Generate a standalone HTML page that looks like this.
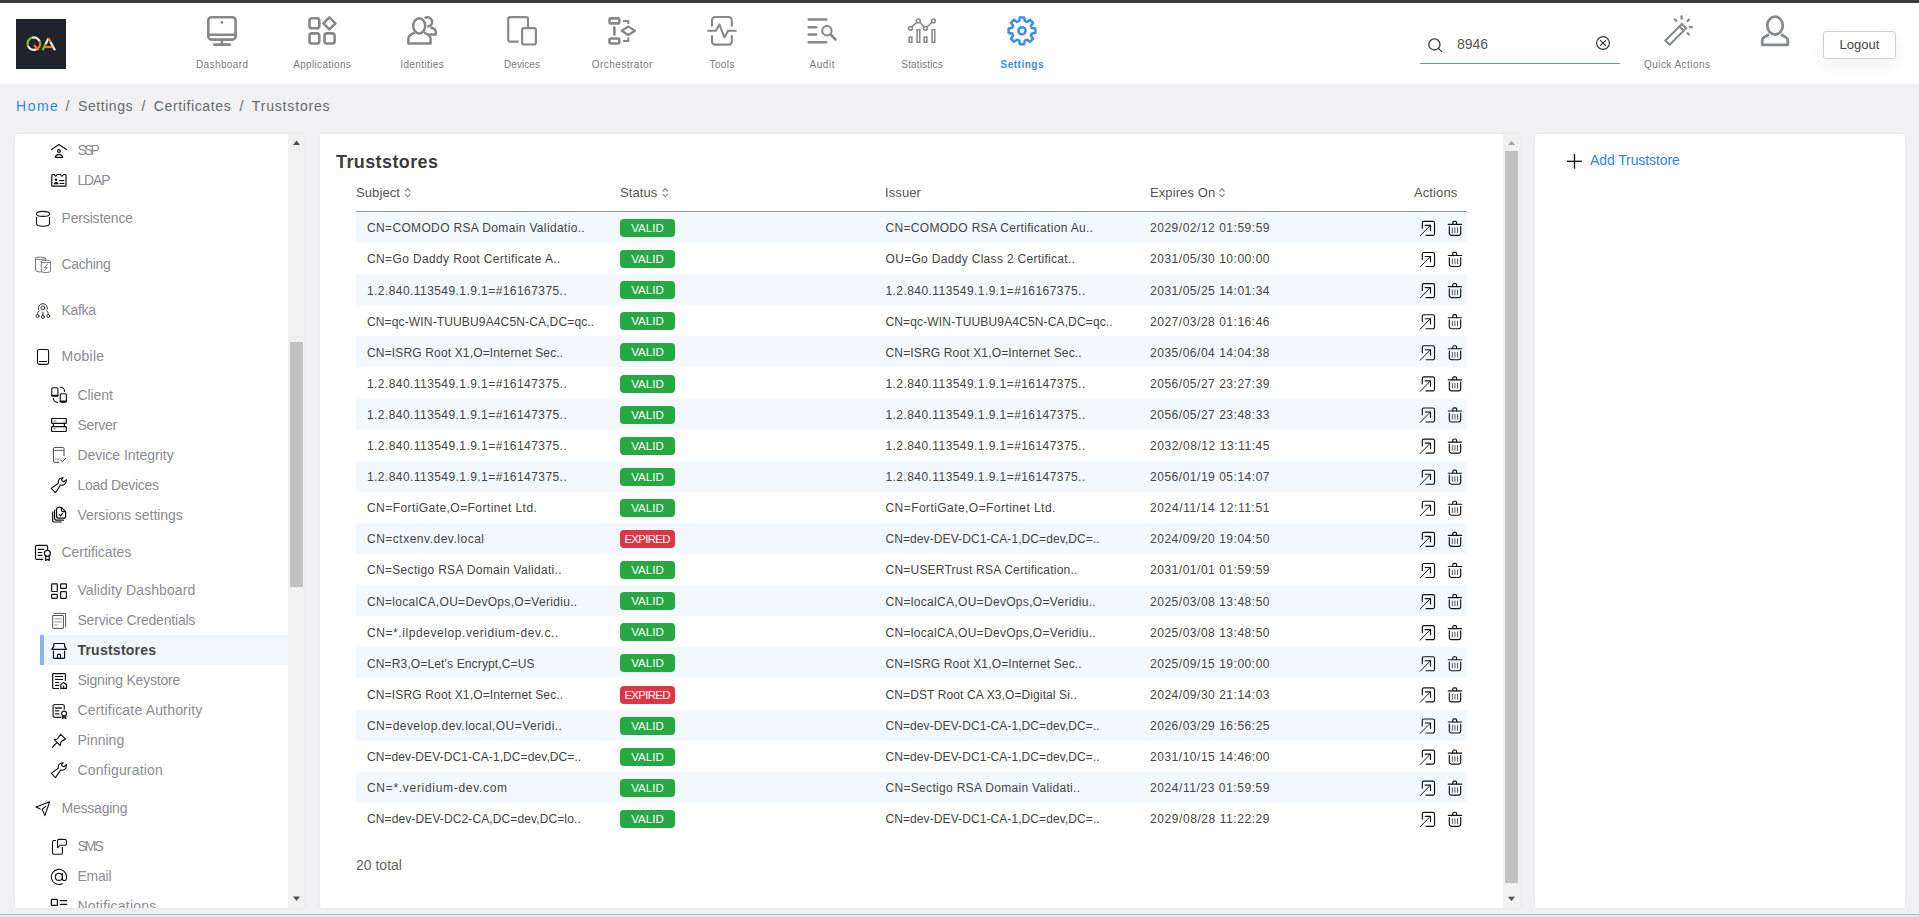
<!DOCTYPE html><html><head><meta charset='utf-8'><style>
*{margin:0;padding:0;box-sizing:border-box}
html,body{width:1919px;height:917px;overflow:hidden;background:#f1f1f3;font-family:"Liberation Sans",sans-serif}
.a{position:absolute}
.t{position:absolute;white-space:nowrap;line-height:1}
svg{position:absolute;overflow:visible}
</style></head><body><div class="a" style="left:0;top:0;width:1919px;height:3px;background:#3a3a3a"></div>
<div class="a" style="left:0;top:3px;width:1919px;height:81px;background:#fff"></div>
<div class="a" style="left:16px;top:19px;width:50px;height:50px;background:#1e232c"></div>
<div class="t" style="left:162px;width:120px;text-align:center;top:59.5px;font-size:10px;letter-spacing:0.408px;text-indent:0.408px;color:#7b7b7b;font-weight:normal">Dashboard</div>
<div class="t" style="left:262px;width:120px;text-align:center;top:59.5px;font-size:10px;letter-spacing:0.338px;text-indent:0.338px;color:#7b7b7b;font-weight:normal">Applications</div>
<div class="t" style="left:362px;width:120px;text-align:center;top:59.5px;font-size:10px;letter-spacing:0.384px;text-indent:0.384px;color:#7b7b7b;font-weight:normal">Identities</div>
<div class="t" style="left:462px;width:120px;text-align:center;top:59.5px;font-size:10px;letter-spacing:0.057px;text-indent:0.057px;color:#7b7b7b;font-weight:normal">Devices</div>
<div class="t" style="left:562px;width:120px;text-align:center;top:59.5px;font-size:10px;letter-spacing:0.454px;text-indent:0.454px;color:#7b7b7b;font-weight:normal">Orchestrator</div>
<div class="t" style="left:662px;width:120px;text-align:center;top:59.5px;font-size:10px;letter-spacing:0.428px;text-indent:0.428px;color:#7b7b7b;font-weight:normal">Tools</div>
<div class="t" style="left:762px;width:120px;text-align:center;top:59.5px;font-size:10px;letter-spacing:0.550px;text-indent:0.550px;color:#7b7b7b;font-weight:normal">Audit</div>
<div class="t" style="left:862px;width:120px;text-align:center;top:59.5px;font-size:10px;letter-spacing:0.144px;text-indent:0.144px;color:#7b7b7b;font-weight:normal">Statistics</div>
<div class="t" style="left:962px;width:120px;text-align:center;top:59.5px;font-size:10px;letter-spacing:0.500px;text-indent:0.500px;color:#3d8ae0;font-weight:bold">Settings</div>
<div class="t" style="left:16.1px;top:99.2px;font-size:14px;color:#2f86f0;letter-spacing:1.461px">Home</div>
<div class="t" style="left:65.5px;top:99.2px;font-size:14px;color:#6b6b6b;letter-spacing:0.000px">/</div>
<div class="t" style="left:78.0px;top:99.2px;font-size:14px;color:#666a6e;letter-spacing:0.563px">Settings</div>
<div class="t" style="left:141.5px;top:99.2px;font-size:14px;color:#6b6b6b;letter-spacing:0.000px">/</div>
<div class="t" style="left:153.8px;top:99.2px;font-size:14px;color:#666a6e;letter-spacing:0.621px">Certificates</div>
<div class="t" style="left:239.5px;top:99.2px;font-size:14px;color:#6b6b6b;letter-spacing:0.000px">/</div>
<div class="t" style="left:251.8px;top:99.2px;font-size:14px;color:#666a6e;letter-spacing:0.832px">Truststores</div>
<div class="a" style="left:15px;top:134px;width:289px;height:774px;background:#fff;border-radius:3px;box-shadow:0 0 5px rgba(0,0,0,0.045)"></div>
<div class="a" style="left:288px;top:134px;width:16px;height:774px;background:#f1f1f1"></div>
<div class="a" style="left:290px;top:342px;width:13px;height:245px;background:#c1c1c1"></div>
<div class="a" style="left:320px;top:134px;width:1200px;height:774px;background:#fff;border-radius:3px;box-shadow:0 0 5px rgba(0,0,0,0.045)"></div>
<div class="a" style="left:1503px;top:134px;width:17px;height:774px;background:#f1f1f1"></div>
<div class="a" style="left:1505px;top:151px;width:13px;height:732px;background:#c1c1c1"></div>
<div class="a" style="left:1535px;top:134px;width:370px;height:774px;background:#fff;border-radius:3px;box-shadow:0 0 5px rgba(0,0,0,0.045)"></div>
<div class="a" style="left:0;top:914px;width:1919px;height:1px;background:#b4bcc6"></div>
<div class="a" style="left:0;top:915px;width:1919px;height:2px;background:#e1ebf7"></div>
<div class="a" style="left:40px;top:635px;width:248px;height:30px;background:#f1f7fd"></div>
<div class="a" style="left:40px;top:635px;width:4px;height:30px;background:#8ab4ee"></div>
<div class="a" style="left:15px;top:134px;width:273px;height:774px;overflow:hidden">
<div class="t" style="left:62.400000000000006px;top:9.35px;font-size:14px;color:#8c8c92;letter-spacing:-2.767px">SSP</div>
<div class="t" style="left:62.400000000000006px;top:39.35px;font-size:14px;color:#8c8c92;letter-spacing:-1.089px">LDAP</div>
<div class="t" style="left:46.5px;top:76.95px;font-size:14px;color:#8c8c92;letter-spacing:-0.163px">Persistence</div>
<div class="t" style="left:46.5px;top:122.85px;font-size:14px;color:#8c8c92;letter-spacing:-0.353px">Caching</div>
<div class="t" style="left:46.5px;top:169.15px;font-size:14px;color:#8c8c92;letter-spacing:-0.320px">Kafka</div>
<div class="t" style="left:46.5px;top:215.35px;font-size:14px;color:#8c8c92;letter-spacing:0.258px">Mobile</div>
<div class="t" style="left:62.400000000000006px;top:253.75px;font-size:14px;color:#8c8c92;letter-spacing:-0.057px">Client</div>
<div class="t" style="left:62.400000000000006px;top:283.75px;font-size:14px;color:#8c8c92;letter-spacing:-0.279px">Server</div>
<div class="t" style="left:62.400000000000006px;top:313.75px;font-size:14px;color:#8c8c92;letter-spacing:-0.013px">Device Integrity</div>
<div class="t" style="left:62.400000000000006px;top:343.75px;font-size:14px;color:#8c8c92;letter-spacing:-0.286px">Load Devices</div>
<div class="t" style="left:62.400000000000006px;top:373.75px;font-size:14px;color:#8c8c92;letter-spacing:-0.022px">Versions settings</div>
<div class="t" style="left:46.5px;top:411.45px;font-size:14px;color:#8c8c92;letter-spacing:-0.028px">Certificates</div>
<div class="t" style="left:62.400000000000006px;top:449.45px;font-size:14px;color:#8c8c92;letter-spacing:0.078px">Validity Dashboard</div>
<div class="t" style="left:62.400000000000006px;top:479.45px;font-size:14px;color:#8c8c92;letter-spacing:-0.182px">Service Credentials</div>
<div class="t" style="left:62.400000000000006px;top:508.65px;font-size:14px;font-weight:bold;color:#444;letter-spacing:0.25px">Truststores</div>
<div class="t" style="left:62.400000000000006px;top:539.45px;font-size:14px;color:#8c8c92;letter-spacing:-0.190px">Signing Keystore</div>
<div class="t" style="left:62.400000000000006px;top:569.45px;font-size:14px;color:#8c8c92;letter-spacing:0.176px">Certificate Authority</div>
<div class="t" style="left:62.400000000000006px;top:599.45px;font-size:14px;color:#8c8c92;letter-spacing:0.019px">Pinning</div>
<div class="t" style="left:62.400000000000006px;top:629.45px;font-size:14px;color:#8c8c92;letter-spacing:0.173px">Configuration</div>
<div class="t" style="left:46.5px;top:667.45px;font-size:14px;color:#8c8c92;letter-spacing:-0.220px">Messaging</div>
<div class="t" style="left:62.400000000000006px;top:705.45px;font-size:14px;color:#8c8c92;letter-spacing:-1.982px">SMS</div>
<div class="t" style="left:62.400000000000006px;top:735.45px;font-size:14px;color:#8c8c92;letter-spacing:-0.215px">Email</div>
<div class="t" style="left:62.400000000000006px;top:765.45px;font-size:14px;color:#8c8c92;letter-spacing:0.218px">Notifications</div>
</div>
<div class="t" style="left:336px;top:153px;font-size:18px;font-weight:bold;color:#3c3c3c;letter-spacing:0.4px">Truststores</div>
<div class="t" style="left:356px;top:186px;font-size:13px;color:#555;letter-spacing:0.1px">Subject</div>
<div class="t" style="left:620px;top:186px;font-size:13px;color:#555;letter-spacing:0.1px">Status</div>
<div class="t" style="left:885px;top:186px;font-size:13px;color:#555;letter-spacing:0.1px">Issuer</div>
<div class="t" style="left:1150px;top:186px;font-size:13px;color:#555;letter-spacing:0.1px">Expires On</div>
<div class="t" style="left:1414px;top:186px;font-size:13px;color:#555;letter-spacing:0.1px">Actions</div>
<div class="a" style="left:356px;top:211px;width:1111px;height:1px;background:#9a9a9a"></div>
<div class="a" style="left:356px;top:212.00px;width:1111px;height:31.1px;background:#f3f8fc"></div>
<div class="t" style="left:367px;top:222.30px;font-size:12px;color:#444;letter-spacing:0.350px">CN=COMODO RSA Domain Validatio..</div>
<div class="t" style="left:885.5px;top:222.30px;font-size:12px;color:#444;letter-spacing:0.313px">CN=COMODO RSA Certification Au..</div>
<div class="t" style="left:1150px;top:222.30px;font-size:12px;color:#444;letter-spacing:0.523px">2029/02/12 01:59:59</div>
<div class="t" style="left:620px;top:219.00px;width:55px;height:18px;border-radius:4px;background:#28a745;color:#fff;font-size:11.5px;line-height:18px;text-align:center;letter-spacing:0.006px;text-indent:0.006px">VALID</div>
<div class="t" style="left:367px;top:253.40px;font-size:12px;color:#444;letter-spacing:0.373px">CN=Go Daddy Root Certificate A..</div>
<div class="t" style="left:885.5px;top:253.40px;font-size:12px;color:#444;letter-spacing:0.315px">OU=Go Daddy Class 2 Certificat..</div>
<div class="t" style="left:1150px;top:253.40px;font-size:12px;color:#444;letter-spacing:0.523px">2031/05/30 10:00:00</div>
<div class="t" style="left:620px;top:250.10px;width:55px;height:18px;border-radius:4px;background:#28a745;color:#fff;font-size:11.5px;line-height:18px;text-align:center;letter-spacing:0.006px;text-indent:0.006px">VALID</div>
<div class="a" style="left:356px;top:274.20px;width:1111px;height:31.1px;background:#f3f8fc"></div>
<div class="t" style="left:367px;top:284.50px;font-size:12px;color:#444;letter-spacing:0.433px">1.2.840.113549.1.9.1=#16167375..</div>
<div class="t" style="left:885.5px;top:284.50px;font-size:12px;color:#444;letter-spacing:0.433px">1.2.840.113549.1.9.1=#16167375..</div>
<div class="t" style="left:1150px;top:284.50px;font-size:12px;color:#444;letter-spacing:0.523px">2031/05/25 14:01:34</div>
<div class="t" style="left:620px;top:281.20px;width:55px;height:18px;border-radius:4px;background:#28a745;color:#fff;font-size:11.5px;line-height:18px;text-align:center;letter-spacing:0.006px;text-indent:0.006px">VALID</div>
<div class="t" style="left:367px;top:315.60px;font-size:12px;color:#444;letter-spacing:0.144px">CN=qc-WIN-TUUBU9A4C5N-CA,DC=qc..</div>
<div class="t" style="left:885.5px;top:315.60px;font-size:12px;color:#444;letter-spacing:0.144px">CN=qc-WIN-TUUBU9A4C5N-CA,DC=qc..</div>
<div class="t" style="left:1150px;top:315.60px;font-size:12px;color:#444;letter-spacing:0.523px">2027/03/28 01:16:46</div>
<div class="t" style="left:620px;top:312.30px;width:55px;height:18px;border-radius:4px;background:#28a745;color:#fff;font-size:11.5px;line-height:18px;text-align:center;letter-spacing:0.006px;text-indent:0.006px">VALID</div>
<div class="a" style="left:356px;top:336.40px;width:1111px;height:31.1px;background:#f3f8fc"></div>
<div class="t" style="left:367px;top:346.70px;font-size:12px;color:#444;letter-spacing:0.153px">CN=ISRG Root X1,O=Internet Sec..</div>
<div class="t" style="left:885.5px;top:346.70px;font-size:12px;color:#444;letter-spacing:0.153px">CN=ISRG Root X1,O=Internet Sec..</div>
<div class="t" style="left:1150px;top:346.70px;font-size:12px;color:#444;letter-spacing:0.523px">2035/06/04 14:04:38</div>
<div class="t" style="left:620px;top:343.40px;width:55px;height:18px;border-radius:4px;background:#28a745;color:#fff;font-size:11.5px;line-height:18px;text-align:center;letter-spacing:0.006px;text-indent:0.006px">VALID</div>
<div class="t" style="left:367px;top:377.80px;font-size:12px;color:#444;letter-spacing:0.433px">1.2.840.113549.1.9.1=#16147375..</div>
<div class="t" style="left:885.5px;top:377.80px;font-size:12px;color:#444;letter-spacing:0.433px">1.2.840.113549.1.9.1=#16147375..</div>
<div class="t" style="left:1150px;top:377.80px;font-size:12px;color:#444;letter-spacing:0.523px">2056/05/27 23:27:39</div>
<div class="t" style="left:620px;top:374.50px;width:55px;height:18px;border-radius:4px;background:#28a745;color:#fff;font-size:11.5px;line-height:18px;text-align:center;letter-spacing:0.006px;text-indent:0.006px">VALID</div>
<div class="a" style="left:356px;top:398.60px;width:1111px;height:31.1px;background:#f3f8fc"></div>
<div class="t" style="left:367px;top:408.90px;font-size:12px;color:#444;letter-spacing:0.433px">1.2.840.113549.1.9.1=#16147375..</div>
<div class="t" style="left:885.5px;top:408.90px;font-size:12px;color:#444;letter-spacing:0.433px">1.2.840.113549.1.9.1=#16147375..</div>
<div class="t" style="left:1150px;top:408.90px;font-size:12px;color:#444;letter-spacing:0.523px">2056/05/27 23:48:33</div>
<div class="t" style="left:620px;top:405.60px;width:55px;height:18px;border-radius:4px;background:#28a745;color:#fff;font-size:11.5px;line-height:18px;text-align:center;letter-spacing:0.006px;text-indent:0.006px">VALID</div>
<div class="t" style="left:367px;top:440.00px;font-size:12px;color:#444;letter-spacing:0.433px">1.2.840.113549.1.9.1=#16147375..</div>
<div class="t" style="left:885.5px;top:440.00px;font-size:12px;color:#444;letter-spacing:0.433px">1.2.840.113549.1.9.1=#16147375..</div>
<div class="t" style="left:1150px;top:440.00px;font-size:12px;color:#444;letter-spacing:0.573px">2032/08/12 13:11:45</div>
<div class="t" style="left:620px;top:436.70px;width:55px;height:18px;border-radius:4px;background:#28a745;color:#fff;font-size:11.5px;line-height:18px;text-align:center;letter-spacing:0.006px;text-indent:0.006px">VALID</div>
<div class="a" style="left:356px;top:460.80px;width:1111px;height:31.1px;background:#f3f8fc"></div>
<div class="t" style="left:367px;top:471.10px;font-size:12px;color:#444;letter-spacing:0.433px">1.2.840.113549.1.9.1=#16147375..</div>
<div class="t" style="left:885.5px;top:471.10px;font-size:12px;color:#444;letter-spacing:0.433px">1.2.840.113549.1.9.1=#16147375..</div>
<div class="t" style="left:1150px;top:471.10px;font-size:12px;color:#444;letter-spacing:0.523px">2056/01/19 05:14:07</div>
<div class="t" style="left:620px;top:467.80px;width:55px;height:18px;border-radius:4px;background:#28a745;color:#fff;font-size:11.5px;line-height:18px;text-align:center;letter-spacing:0.006px;text-indent:0.006px">VALID</div>
<div class="t" style="left:367px;top:502.20px;font-size:12px;color:#444;letter-spacing:0.436px">CN=FortiGate,O=Fortinet Ltd.</div>
<div class="t" style="left:885.5px;top:502.20px;font-size:12px;color:#444;letter-spacing:0.436px">CN=FortiGate,O=Fortinet Ltd.</div>
<div class="t" style="left:1150px;top:502.20px;font-size:12px;color:#444;letter-spacing:0.622px">2024/11/14 12:11:51</div>
<div class="t" style="left:620px;top:498.90px;width:55px;height:18px;border-radius:4px;background:#28a745;color:#fff;font-size:11.5px;line-height:18px;text-align:center;letter-spacing:0.006px;text-indent:0.006px">VALID</div>
<div class="a" style="left:356px;top:523.00px;width:1111px;height:31.1px;background:#f3f8fc"></div>
<div class="t" style="left:367px;top:533.30px;font-size:12px;color:#444;letter-spacing:0.503px">CN=ctxenv.dev.local</div>
<div class="t" style="left:885.5px;top:533.30px;font-size:12px;color:#444;letter-spacing:0.086px">CN=dev-DEV-DC1-CA-1,DC=dev,DC=..</div>
<div class="t" style="left:1150px;top:533.30px;font-size:12px;color:#444;letter-spacing:0.523px">2024/09/20 19:04:50</div>
<div class="t" style="left:620px;top:530.00px;width:55px;height:18px;border-radius:4px;background:#dc3545;color:#fff;font-size:11.5px;line-height:18px;text-align:center;letter-spacing:-0.712px;text-indent:-0.712px">EXPIRED</div>
<div class="t" style="left:367px;top:564.40px;font-size:12px;color:#444;letter-spacing:0.312px">CN=Sectigo RSA Domain Validati..</div>
<div class="t" style="left:885.5px;top:564.40px;font-size:12px;color:#444;letter-spacing:0.218px">CN=USERTrust RSA Certification..</div>
<div class="t" style="left:1150px;top:564.40px;font-size:12px;color:#444;letter-spacing:0.523px">2031/01/01 01:59:59</div>
<div class="t" style="left:620px;top:561.10px;width:55px;height:18px;border-radius:4px;background:#28a745;color:#fff;font-size:11.5px;line-height:18px;text-align:center;letter-spacing:0.006px;text-indent:0.006px">VALID</div>
<div class="a" style="left:356px;top:585.20px;width:1111px;height:31.1px;background:#f3f8fc"></div>
<div class="t" style="left:367px;top:595.50px;font-size:12px;color:#444;letter-spacing:0.314px">CN=localCA,OU=DevOps,O=Veridiu..</div>
<div class="t" style="left:885.5px;top:595.50px;font-size:12px;color:#444;letter-spacing:0.314px">CN=localCA,OU=DevOps,O=Veridiu..</div>
<div class="t" style="left:1150px;top:595.50px;font-size:12px;color:#444;letter-spacing:0.523px">2025/03/08 13:48:50</div>
<div class="t" style="left:620px;top:592.20px;width:55px;height:18px;border-radius:4px;background:#28a745;color:#fff;font-size:11.5px;line-height:18px;text-align:center;letter-spacing:0.006px;text-indent:0.006px">VALID</div>
<div class="t" style="left:367px;top:626.60px;font-size:12px;color:#444;letter-spacing:0.574px">CN=*.ilpdevelop.veridium-dev.c..</div>
<div class="t" style="left:885.5px;top:626.60px;font-size:12px;color:#444;letter-spacing:0.314px">CN=localCA,OU=DevOps,O=Veridiu..</div>
<div class="t" style="left:1150px;top:626.60px;font-size:12px;color:#444;letter-spacing:0.523px">2025/03/08 13:48:50</div>
<div class="t" style="left:620px;top:623.30px;width:55px;height:18px;border-radius:4px;background:#28a745;color:#fff;font-size:11.5px;line-height:18px;text-align:center;letter-spacing:0.006px;text-indent:0.006px">VALID</div>
<div class="a" style="left:356px;top:647.40px;width:1111px;height:31.1px;background:#f3f8fc"></div>
<div class="t" style="left:367px;top:657.70px;font-size:12px;color:#444;letter-spacing:0.142px">CN=R3,O=Let&#39;s Encrypt,C=US</div>
<div class="t" style="left:885.5px;top:657.70px;font-size:12px;color:#444;letter-spacing:0.153px">CN=ISRG Root X1,O=Internet Sec..</div>
<div class="t" style="left:1150px;top:657.70px;font-size:12px;color:#444;letter-spacing:0.523px">2025/09/15 19:00:00</div>
<div class="t" style="left:620px;top:654.40px;width:55px;height:18px;border-radius:4px;background:#28a745;color:#fff;font-size:11.5px;line-height:18px;text-align:center;letter-spacing:0.006px;text-indent:0.006px">VALID</div>
<div class="t" style="left:367px;top:688.80px;font-size:12px;color:#444;letter-spacing:0.153px">CN=ISRG Root X1,O=Internet Sec..</div>
<div class="t" style="left:885.5px;top:688.80px;font-size:12px;color:#444;letter-spacing:0.110px">CN=DST Root CA X3,O=Digital Si..</div>
<div class="t" style="left:1150px;top:688.80px;font-size:12px;color:#444;letter-spacing:0.523px">2024/09/30 21:14:03</div>
<div class="t" style="left:620px;top:685.50px;width:55px;height:18px;border-radius:4px;background:#dc3545;color:#fff;font-size:11.5px;line-height:18px;text-align:center;letter-spacing:-0.712px;text-indent:-0.712px">EXPIRED</div>
<div class="a" style="left:356px;top:709.60px;width:1111px;height:31.1px;background:#f3f8fc"></div>
<div class="t" style="left:367px;top:719.90px;font-size:12px;color:#444;letter-spacing:0.443px">CN=develop.dev.local,OU=Veridi..</div>
<div class="t" style="left:885.5px;top:719.90px;font-size:12px;color:#444;letter-spacing:0.086px">CN=dev-DEV-DC1-CA-1,DC=dev,DC=..</div>
<div class="t" style="left:1150px;top:719.90px;font-size:12px;color:#444;letter-spacing:0.523px">2026/03/29 16:56:25</div>
<div class="t" style="left:620px;top:716.60px;width:55px;height:18px;border-radius:4px;background:#28a745;color:#fff;font-size:11.5px;line-height:18px;text-align:center;letter-spacing:0.006px;text-indent:0.006px">VALID</div>
<div class="t" style="left:367px;top:751.00px;font-size:12px;color:#444;letter-spacing:0.086px">CN=dev-DEV-DC1-CA-1,DC=dev,DC=..</div>
<div class="t" style="left:885.5px;top:751.00px;font-size:12px;color:#444;letter-spacing:0.086px">CN=dev-DEV-DC1-CA-1,DC=dev,DC=..</div>
<div class="t" style="left:1150px;top:751.00px;font-size:12px;color:#444;letter-spacing:0.523px">2031/10/15 14:46:00</div>
<div class="t" style="left:620px;top:747.70px;width:55px;height:18px;border-radius:4px;background:#28a745;color:#fff;font-size:11.5px;line-height:18px;text-align:center;letter-spacing:0.006px;text-indent:0.006px">VALID</div>
<div class="a" style="left:356px;top:771.80px;width:1111px;height:31.1px;background:#f3f8fc"></div>
<div class="t" style="left:367px;top:782.10px;font-size:12px;color:#444;letter-spacing:0.695px">CN=*.veridium-dev.com</div>
<div class="t" style="left:885.5px;top:782.10px;font-size:12px;color:#444;letter-spacing:0.312px">CN=Sectigo RSA Domain Validati..</div>
<div class="t" style="left:1150px;top:782.10px;font-size:12px;color:#444;letter-spacing:0.573px">2024/11/23 01:59:59</div>
<div class="t" style="left:620px;top:778.80px;width:55px;height:18px;border-radius:4px;background:#28a745;color:#fff;font-size:11.5px;line-height:18px;text-align:center;letter-spacing:0.006px;text-indent:0.006px">VALID</div>
<div class="t" style="left:367px;top:813.20px;font-size:12px;color:#444;letter-spacing:0.114px">CN=dev-DEV-DC2-CA,DC=dev,DC=lo..</div>
<div class="t" style="left:885.5px;top:813.20px;font-size:12px;color:#444;letter-spacing:0.086px">CN=dev-DEV-DC1-CA-1,DC=dev,DC=..</div>
<div class="t" style="left:1150px;top:813.20px;font-size:12px;color:#444;letter-spacing:0.573px">2029/08/28 11:22:29</div>
<div class="t" style="left:620px;top:809.90px;width:55px;height:18px;border-radius:4px;background:#28a745;color:#fff;font-size:11.5px;line-height:18px;text-align:center;letter-spacing:0.006px;text-indent:0.006px">VALID</div>
<div class="t" style="left:356px;top:858px;font-size:14px;color:#666">20 total</div>
<div class="t" style="left:1590px;top:153px;font-size:14px;color:#2d86ee;letter-spacing:-0.1px">Add Truststore</div>
<div class="a" style="left:1420px;top:63px;width:200px;height:1px;background:#7d9298"></div>
<div class="t" style="left:1457px;top:37px;font-size:14px;color:#555">8946</div>
<div class="t" style="left:1617px;width:120px;text-align:center;top:59.5px;font-size:10px;letter-spacing:0.45px;text-indent:0.45px;color:#7b7b7b">Quick Actions</div>
<div class="a" style="left:1823px;top:31px;width:73px;height:28px;border:1px solid #cfcfcf;border-radius:3px;background:#fff;box-shadow:0 7px 18px rgba(0,0,0,0.055)"></div>
<div class="t" style="left:1823px;width:73px;text-align:center;top:38px;font-size:13px;color:#444">Logout</div>
<svg class="a" style="left:0;top:0" width="1919" height="917" viewBox="0 0 1919 917"><g fill="none" stroke="#878787" stroke-width="2.6" stroke-linecap="round" stroke-linejoin="round"><rect x="208.3" y="17.2" width="27.3" height="22.4" rx="3.2"/><line x1="208.3" y1="34.7" x2="235.6" y2="34.7"/><line x1="221.9" y1="39.6" x2="221.9" y2="44.4"/><line x1="214.3" y1="44.6" x2="229.9" y2="44.6"/></g><circle cx="221.9" cy="22.3" r="1.35" fill="#878787"/>
<g fill="none" stroke="#878787" stroke-width="2.6" stroke-linejoin="round"><rect x="309.5" y="18.2" width="9.8" height="10" rx="2.3"/><rect x="309.5" y="33.4" width="9.8" height="10.1" rx="2.3"/><rect x="324.5" y="33.4" width="10.1" height="10.1" rx="2.3"/><path d="M329.4,17.3 L335.4,23.3 L329.4,29.3 L323.4,23.3 Z"/></g>
<g fill="none" stroke="#878787" stroke-width="2.5" stroke-linejoin="round"><ellipse cx="419.2" cy="25.8" rx="6" ry="7.6"/><path d="M414.6,32.6 C411,34.2 408.4,35.6 408.4,38.5 V43.5 H430.6 V38.5 C430.6,36.5 428.6,34.6 424.2,32.6"/><path d="M424.6,18.2 A4.7,4.7 0 1 1 427.2,26.6"/><path d="M430.4,27.6 C433.5,28.2 435.8,29.5 435.8,32 V34.6 H428.5"/></g>
<g fill="none" stroke="#868a8d" stroke-width="2.2" stroke-linecap="round" stroke-linejoin="round"><path d="M517.8,41.7 H510.3 A2,2 0 0 1 508.2,39.7 V19.1 A2,2 0 0 1 510.2,17.1 H526 A2,2 0 0 1 528,19.1 V27.8"/><rect x="522.1" y="28.2" width="13.8" height="16.3" rx="2"/></g>
<g fill="none" stroke="#878787" stroke-width="2.6" stroke-linecap="round" stroke-linejoin="round"><rect x="609.5" y="18.4" width="9.8" height="5" rx="1.5"/><rect x="609.5" y="38.5" width="9.8" height="5" rx="1.5"/><line x1="614.4" y1="27.6" x2="614.4" y2="34.5"/><path d="M628.3,26.6 L635,30.8 L628.3,35 L621.6,30.8 Z" stroke-width="2.2"/><path d="M623,21 H628.3 V24" stroke-width="2" stroke-linecap="butt"/><path d="M628.3,37.6 V41 H623" stroke-width="2" stroke-linecap="butt"/></g>
<g fill="none" stroke="#878787" stroke-width="2.1" stroke-linecap="butt" stroke-linejoin="round"><path d="M712,26.6 V20.2 A3.2,3.2 0 0 1 715.2,17 H728.6 A3.2,3.2 0 0 1 731.8,20.2 V26.6"/><path d="M712,35.3 V41.4 A3.2,3.2 0 0 0 715.2,44.6 H728.6 A3.2,3.2 0 0 0 731.8,41.4 V35.3"/><path d="M707.4,30.8 H715.9 L719.4,24.4 L724.4,37.5 L728.1,30.8 H736.6"/></g>
<g fill="none" stroke="#878787" stroke-width="2.5" stroke-linecap="round"><line x1="808.8" y1="19.5" x2="826.3" y2="19.5"/><line x1="808.8" y1="27.2" x2="816.2" y2="27.2"/><line x1="808.8" y1="34.6" x2="816.2" y2="34.6"/><line x1="808.8" y1="42.3" x2="826.3" y2="42.3"/><circle cx="826.9" cy="30.8" r="4.7" stroke-width="2"/><line x1="830.6" y1="34.5" x2="835.6" y2="39.5"/></g>
<g fill="none" stroke="#878787" stroke-width="1.5"><rect x="909.2" y="37.1" width="2.7" height="5.2"/><rect x="917.1" y="29.7" width="2.7" height="12.6"/><rect x="924.2" y="37.1" width="2.7" height="5.2"/><rect x="932.1" y="29.7" width="2.7" height="12.6"/><circle cx="910.5" cy="28.3" r="1.9"/><circle cx="918.3" cy="20.9" r="1.9"/><circle cx="925.5" cy="28.3" r="1.9"/><circle cx="933.4" cy="20.9" r="1.9"/><line x1="911.9" y1="27" x2="916.9" y2="22.2"/><line x1="919.7" y1="22.2" x2="924.1" y2="27"/><line x1="926.9" y1="27" x2="932" y2="22.2"/></g>
<g fill="none" stroke="#3d8fe3" stroke-width="2.5" stroke-linejoin="round"><path d="M1019.27,20.97 L1019.76,17.39 L1024.24,17.39 L1024.73,20.97 L1027.02,21.92 L1029.90,19.73 L1033.07,22.90 L1030.88,25.78 L1031.83,28.07 L1035.41,28.56 L1035.41,33.04 L1031.83,33.53 L1030.88,35.82 L1033.07,38.70 L1029.90,41.87 L1027.02,39.68 L1024.73,40.63 L1024.24,44.21 L1019.76,44.21 L1019.27,40.63 L1016.98,39.68 L1014.10,41.87 L1010.93,38.70 L1013.12,35.82 L1012.17,33.53 L1008.59,33.04 L1008.59,28.56 L1012.17,28.07 L1013.12,25.78 L1010.93,22.90 L1014.10,19.73 L1016.98,21.92Z"/><circle cx="1022" cy="30.8" r="3.6"/></g>
<g fill="none" stroke="#3a3a3a" stroke-width="1.3" stroke-linecap="round"><circle cx="1434.4" cy="44.4" r="5.6"/><line x1="1438.4" y1="48.4" x2="1441.6" y2="51.6"/></g>
<g fill="none" stroke="#3a3a3a" stroke-width="1.2" stroke-linecap="round"><circle cx="1603" cy="43" r="6.4"/><line x1="1600.3" y1="40.3" x2="1605.7" y2="45.7"/><line x1="1605.7" y1="40.3" x2="1600.3" y2="45.7"/></g>
<g fill="none" stroke="#888b8d" stroke-width="2.1" stroke-linecap="round"><path d="M1665.4,40.6 L1681.9,24.1 L1686.1,28.3 L1669.6,44.8 Z" stroke-linejoin="miter"/><line x1="1679.4" y1="26.6" x2="1683.6" y2="30.8"/><line x1="1681.6" y1="16.4" x2="1681.6" y2="18.8" stroke-width="2.3"/><line x1="1674.9" y1="19.4" x2="1676.3" y2="20.8" stroke-width="2.3"/><line x1="1688.9" y1="19.6" x2="1687.5" y2="21" stroke-width="2.3"/><line x1="1689.8" y1="27.2" x2="1691.9" y2="27.2" stroke-width="2.3"/><line x1="1687.7" y1="33.2" x2="1689" y2="34.5" stroke-width="2.3"/></g>
<g fill="none" stroke="#878b8e" stroke-width="2.8" stroke-linejoin="round"><ellipse cx="1775" cy="25.6" rx="7.8" ry="8.9"/><path d="M1769,34.6 L1764.5,37 C1762.8,38 1762.2,39 1762.2,40.6 V44.8 H1787.8 V40.6 C1787.8,39 1787.2,38 1785.5,37 L1781,34.6"/></g>
<g fill="none" stroke-width="2.2">
<path d="M31.65,37.68 A6.3,6.3 0 0 1 39.72,41.45" stroke="#eeeeee"/>
<path d="M39.72,41.45 A6.3,6.3 0 0 1 36.95,49.06" stroke="#f07c22"/>
<path d="M36.95,49.06 A6.3,6.3 0 0 1 27.88,45.75" stroke="#f2f2f2"/>
<path d="M27.88,45.75 A6.3,6.3 0 0 1 31.65,37.68" stroke="#7cc620"/>
<line x1="34" y1="45" x2="38.6" y2="50" stroke="#f07c22"/>
<line x1="42.6" y1="50.3" x2="45.5" y2="44.2" stroke="#7cc620"/>
<line x1="45.5" y1="44.2" x2="48.5" y2="38.2" stroke="#eeeeee"/>
<line x1="48.5" y1="38.2" x2="50.5" y2="42" stroke="#f07c22"/>
<line x1="50.5" y1="42" x2="55" y2="50.3" stroke="#eeeeee"/>
<line x1="44.8" y1="47" x2="52.6" y2="47" stroke="#f07c22"/>
</g>
<g fill="none" stroke="#111" stroke-width="1.2" stroke-linecap="round" stroke-linejoin="round" ><path d="M51.5,149.6 L58.9,144.6 L66.6,149.6"/><circle cx="58.9" cy="151" r="1.4"/><path d="M55.3,157.4 C55.6,155.3 57,154.3 58.9,154.3 C60.8,154.3 62.3,155.3 62.6,157.4 Z"/></g>
<g fill="none" stroke="#111" stroke-width="1.2" stroke-linecap="round" stroke-linejoin="round" ><path d="M51.8,186.1 V175.5 A1,1 0 0 1 52.8,174.5 H54.2 Q55.6,177.6 57,174.5 H60.5 Q61.9,177.6 63.3,174.5 H65 A1,1 0 0 1 66,175.5 V186.1 Z"/><line x1="59.6" y1="180.5" x2="63.8" y2="180.5"/><line x1="60" y1="183.5" x2="63.8" y2="183.5"/><circle cx="56" cy="179.8" r="0.6"/><path d="M54.3,183.7 Q56.1,181.6 57.9,183.7 Z" fill="#111"/></g>
<g fill="none" stroke="#111" stroke-width="1.1" stroke-linecap="round" stroke-linejoin="round" ><ellipse cx="43" cy="213.9" rx="6.5" ry="2.5"/><path d="M36.5,217.2 V223.8 C36.5,225.4 39.5,226.2 43,226.2 C46.5,226.2 49.5,225.4 49.5,223.8 V217.2"/></g>
<g fill="none" stroke="#6a6a6a" stroke-width="0.9" stroke-linecap="round" stroke-linejoin="round" ><path d="M35.5,258.5 V270 C35.5,271.3 37.8,271.9 40.5,271.9 H41.3"/><ellipse cx="40.5" cy="258.3" rx="5" ry="1.2"/><path d="M45.5,258.5 V260.4"/><path d="M41.3,261.6 V271 C41.3,272 43.3,272.5 46,272.5 C48.7,272.5 50.6,272 50.6,271 V261.6 C50.6,260.6 48.7,260.3 46,260.3 C43.3,260.3 41.3,260.6 41.3,261.6 Z"/><line x1="41.5" y1="262.6" x2="50.5" y2="262.6"/><path d="M47.3,264.3 L44.5,267.6 H47.2 L44.6,270.4"/></g>
<g fill="none" stroke="#333" stroke-width="1.0" stroke-linecap="round" stroke-linejoin="round" ><path d="M38.4,309.2 A4.6,4.6 0 1 1 47.4,309.2"/><circle cx="42.9" cy="307.9" r="2"/><path d="M39.3,310.9 C38,311.6 37.5,312.5 37.5,314.2"/><path d="M46.5,310.9 C47.8,311.6 48.3,312.5 48.3,314.2"/><line x1="42.9" y1="312.2" x2="42.9" y2="315"/><circle cx="37.5" cy="316" r="1.5"/><circle cx="42.9" cy="316.9" r="1.5"/><circle cx="48.3" cy="316" r="1.5"/></g>
<g fill="none" stroke="#111" stroke-width="1.1" stroke-linecap="round" stroke-linejoin="round" ><rect x="37.5" y="349.5" width="11.1" height="14.9" rx="1.6"/><line x1="39.4" y1="361.5" x2="46.7" y2="361.5"/></g>
<g fill="none" stroke="#111" stroke-width="1.1" stroke-linecap="round" stroke-linejoin="round" ><rect x="51.8" y="387.8" width="6.1" height="8.4" rx="1"/><line x1="51.8" y1="395.5" x2="57.9" y2="395.5" stroke-width="1.6"/><rect x="60.3" y="393.8" width="6.1" height="8.3" rx="1"/><line x1="60.3" y1="401.4" x2="66.4" y2="401.4" stroke-width="1.6"/><path d="M60.3,387.3 A4.3,4.3 0 0 1 64.6,391.4"/><path d="M53.4,398.3 A4.2,4.2 0 0 0 57.5,402.4"/></g>
<g fill="none" stroke="#111" stroke-width="1.2" stroke-linecap="round" stroke-linejoin="round" ><rect x="51.6" y="418.5" width="14.7" height="4.9" rx="0.5"/><rect x="51.6" y="426.6" width="14.7" height="4.9" rx="0.5"/><line x1="53.5" y1="423.4" x2="53.5" y2="426.6"/><line x1="64.4" y1="423.4" x2="64.4" y2="426.6"/><line x1="53.7" y1="421" x2="56" y2="421" stroke="#777" stroke-width="1"/><line x1="63.3" y1="421" x2="64" y2="421" stroke="#bbb" stroke-width="1"/><line x1="53.7" y1="429" x2="56" y2="429" stroke="#777" stroke-width="1"/><line x1="63.3" y1="429" x2="64" y2="429" stroke="#bbb" stroke-width="1"/></g>
<g fill="none" stroke="#111" stroke-width="1.0" stroke-linecap="round" stroke-linejoin="round" ><path d="M58.8,462.3 H54.8 A1.3,1.3 0 0 1 53.5,461 V448.7 A1.3,1.3 0 0 1 54.8,447.4 H62.7 A1.3,1.3 0 0 1 64,448.7 V455.6" stroke="#444"/><line x1="53.5" y1="450.4" x2="64" y2="450.4" stroke="#666"/><line x1="53.5" y1="459" x2="58.8" y2="459" stroke="#999"/><path d="M60.5,460 L62.3,461.6 L65.8,458.3" stroke="#555"/></g>
<g fill="none" stroke="#111" stroke-width="1.1" stroke-linecap="round" stroke-linejoin="round" ><path transform="translate(0,0)" d="M51.2,488.4 L58.3,483.2 C58,481.6 58.2,480.4 59.4,479.1 C60.4,478 61.6,477.6 63.3,477.7 L61.5,479.7 C61.8,481 62.5,481.5 63.8,481.7 L66.4,479.6 C66.6,481.6 66.1,483 64.8,484.2 C63.7,485.1 62.3,485.3 60.5,485.1 L55.5,492.6 Z"/></g>
<g fill="none" stroke="#111" stroke-width="1.2" stroke-linecap="round" stroke-linejoin="round" ><path d="M56.6,516.2 V509.4 A2,2 0 0 1 58.6,507.4 H61.4 L65.6,511.6 V516.2 A2,2 0 0 1 63.6,518.2 H58.6 A2,2 0 0 1 56.6,516.2 Z"/><path d="M61.4,507.6 V510 A1.6,1.6 0 0 0 63,511.6 H65.4"/><path d="M55,510.2 A1.6,1.6 0 0 0 54.6,511.3 V518.6 A1.6,1.6 0 0 0 56.2,520.2 H63.4"/><path d="M52.9,512 A1.6,1.6 0 0 0 52.7,512.8 V520.4 A1.6,1.6 0 0 0 54.3,522 H61.3"/><path d="M59.4,514.5 L60.5,515.8 L62.6,513.3"/></g>
<g fill="none" stroke="#111" stroke-width="1.2" stroke-linecap="round" stroke-linejoin="round" ><path d="M42.6,559.4 H37 A1.5,1.5 0 0 1 35.5,557.9 V546.9 A1.5,1.5 0 0 1 37,545.4 H46.1 A1.5,1.5 0 0 1 47.6,546.9 V550.2"/><line x1="38.2" y1="549.4" x2="43.8" y2="549.4"/><line x1="38.2" y1="552.5" x2="41.8" y2="552.5"/><line x1="38.2" y1="555.4" x2="41.8" y2="555.4"/><circle cx="47.4" cy="553.3" r="3"/><path d="M45.6,555.8 V560.4 L47.4,559.4 L49.3,560.4 V555.8"/></g>
<g fill="none" stroke="#111" stroke-width="1.2" stroke-linecap="round" stroke-linejoin="round" ><rect x="51.6" y="583.8" width="5.7" height="7.7" rx="0.7"/><rect x="60.6" y="583.8" width="5.8" height="4.6" rx="0.7"/><rect x="51.6" y="594.4" width="5.7" height="3.9" rx="0.7"/><rect x="60.6" y="591.6" width="5.8" height="6.7" rx="0.7"/></g>
<g fill="none" stroke="#555" stroke-width="1.0" stroke-linecap="round" stroke-linejoin="round" ><rect x="52.7" y="615.5" width="10.7" height="12.9" rx="0.4"/><path d="M53.9,613.4 H65.6 V626.8"/><line x1="55" y1="618.9" x2="61" y2="618.9" stroke="#aaa" stroke-width="1.3"/><line x1="55" y1="621.9" x2="61" y2="621.9" stroke="#aaa" stroke-width="1.3"/><line x1="55" y1="624.9" x2="57" y2="624.9" stroke="#aaa" stroke-width="1.3"/></g>
<g fill="none" stroke="#111" stroke-width="1.2" stroke-linecap="round" stroke-linejoin="round" ><path d="M53.8,646.4 V644.3 A0.8,0.8 0 0 1 54.6,643.5 H63.8 A0.8,0.8 0 0 1 64.6,644.3 V646.4 L66.5,649.3 H51.7 Z"/><path d="M53.5,651.2 V657.6 A0.7,0.7 0 0 0 54.2,658.3 H64 A0.7,0.7 0 0 0 64.6,657.6 V651.2"/><path d="M57.5,658.2 V655.2 A0.8,0.8 0 0 1 58.3,654.4 H59.7 A0.8,0.8 0 0 1 60.5,655.2 V658.2"/></g>
<g fill="none" stroke="#111" stroke-width="1.2" stroke-linecap="round" stroke-linejoin="round" ><path d="M58.5,688.5 H53.5 A0.8,0.8 0 0 1 52.7,687.7 V674.5 A0.8,0.8 0 0 1 53.5,673.7 H64.6 A0.8,0.8 0 0 1 65.4,674.5 V680.6"/><line x1="55.4" y1="676.5" x2="62.7" y2="676.5"/><line x1="55.4" y1="679.5" x2="62.7" y2="679.5"/><line x1="55.4" y1="682.5" x2="58.8" y2="682.5"/><line x1="55.4" y1="685.4" x2="58.8" y2="685.4"/><path d="M60.8,688.3 V684.6 L63.6,682.4 L66.5,684.6 V688.3 Z"/><line x1="63.6" y1="686" x2="63.6" y2="688.3"/></g>
<g fill="none" stroke="#222" stroke-width="1.2" stroke-linecap="round" stroke-linejoin="round" ><path d="M60.8,717.4 H54.8 A1.7,1.7 0 0 1 53.1,715.7 V706.2 A1.7,1.7 0 0 1 54.8,704.5 H62.6 A1.7,1.7 0 0 1 64.3,706.2 V709.2"/><line x1="55.4" y1="708" x2="61.6" y2="708" stroke-width="1.4"/><line x1="55.4" y1="710.9" x2="58.8" y2="710.9" stroke-width="1.4"/><line x1="55.4" y1="713.9" x2="58.8" y2="713.9" stroke-width="1.4"/><circle cx="64.1" cy="713.6" r="2.4"/><path d="M62.5,715.6 L62.3,718.4 L64.1,717.5 L65.9,718.4 L65.7,715.6" fill="#222"/></g>
<g fill="none" stroke="#111" stroke-width="1.1" stroke-linecap="round" stroke-linejoin="round" ><path d="M60.7,734.4 L65.6,739 L61,741.8 L60.3,745.5 L54.2,739.7 L57.3,739 Z"/><line x1="56.5" y1="743" x2="52.3" y2="747.4"/></g>
<g fill="none" stroke="#111" stroke-width="1.1" stroke-linecap="round" stroke-linejoin="round" ><path transform="translate(0,285)" d="M51.2,488.4 L58.3,483.2 C58,481.6 58.2,480.4 59.4,479.1 C60.4,478 61.6,477.6 63.3,477.7 L61.5,479.7 C61.8,481 62.5,481.5 63.8,481.7 L66.4,479.6 C66.6,481.6 66.1,483 64.8,484.2 C63.7,485.1 62.3,485.3 60.5,485.1 L55.5,492.6 Z"/></g>
<g fill="none" stroke="#111" stroke-width="1.1" stroke-linecap="round" stroke-linejoin="round" ><path d="M36.2,807 L49.6,801.8 L44.9,815.6 L42.2,809.5 L45.5,806.3"/><path d="M36.2,807 L40.2,809.1"/></g>
<g fill="none" stroke="#111" stroke-width="1.1" stroke-linecap="round" stroke-linejoin="round" ><path d="M55.5,840.5 H54 A1.5,1.5 0 0 0 52.5,842 V852.8 A1.5,1.5 0 0 0 54,854.3 H60.9 A1.5,1.5 0 0 0 62.4,852.8 V847.2"/><path d="M57.5,847.6 V840.9 A1.5,1.5 0 0 1 59,839.4 H64.9 A1.5,1.5 0 0 1 66.4,840.9 V843.8 A1.5,1.5 0 0 1 64.9,845.3 H60.3 Z"/></g>
<g fill="none" stroke="#111" stroke-width="1.1" stroke-linecap="round" stroke-linejoin="round" ><circle cx="58.9" cy="876.9" r="3.5"/><path d="M62.4,873.2 V878.5 C62.4,880 63.2,880.6 64.3,880.6 C65.6,880.6 66.5,879.2 66.5,876.9 A7.6,7.6 0 1 0 62.2,883.7"/></g>
<g fill="none" stroke="#111" stroke-width="1.2" stroke-linecap="round" stroke-linejoin="round" ><rect x="51.4" y="899.4" width="6" height="6" rx="0.6"/><line x1="60.3" y1="900.6" x2="66.7" y2="900.6"/><line x1="60.3" y1="904.3" x2="66.7" y2="904.3"/></g>
<g stroke="#111" stroke-width="1.3"><line x1="1567" y1="161.3" x2="1582" y2="161.3"/><line x1="1574.5" y1="153.9" x2="1574.5" y2="168.7"/></g>
<path d="M293,145 L296.5,140.5 L300,145 Z" fill="#505050"/>
<path d="M293,896.6 L296.5,901 L300,896.6 Z" fill="#505050"/>
<path d="M1508,145 L1511.5,140.7 L1515,145 Z" fill="#a3a3a3"/>
<path d="M1508,896.7 L1511.5,901 L1515,896.7 Z" fill="#505050"/>
<g transform="translate(0,0.00)" fill="none" stroke="#111" stroke-width="1.15" stroke-linejoin="round" stroke-linecap="round"><path d="M1422.3,228.3 V223 A1.6,1.6 0 0 1 1423.9,221.4 H1432.9 A1.6,1.6 0 0 1 1434.5,223 V233.8 A1.6,1.6 0 0 1 1432.9,235.4 H1426"/><line x1="1420.2" y1="235.8" x2="1430.2" y2="225.6" stroke-width="0.95"/><path d="M1425.2,225.4 H1430.5 V230.7"/><path d="M1452.8,224.2 V222.6 A1.3,1.3 0 0 1 1454.1,221.3 H1455.3 A1.3,1.3 0 0 1 1456.6,222.6 V224.2"/><line x1="1448.3" y1="224.4" x2="1461.6" y2="224.4"/><path d="M1449.3,226.6 V233.2 A2.2,2.2 0 0 0 1451.5,235.4 H1458.5 A2.2,2.2 0 0 0 1460.7,233.2 V226.6"/><g stroke="#555" stroke-width="1"><line x1="1452.3" y1="227.8" x2="1452.3" y2="232.6"/><line x1="1454.9" y1="227.8" x2="1454.9" y2="232.6"/><line x1="1457.5" y1="227.8" x2="1457.5" y2="232.6"/></g></g>
<g transform="translate(0,31.10)" fill="none" stroke="#111" stroke-width="1.15" stroke-linejoin="round" stroke-linecap="round"><path d="M1422.3,228.3 V223 A1.6,1.6 0 0 1 1423.9,221.4 H1432.9 A1.6,1.6 0 0 1 1434.5,223 V233.8 A1.6,1.6 0 0 1 1432.9,235.4 H1426"/><line x1="1420.2" y1="235.8" x2="1430.2" y2="225.6" stroke-width="0.95"/><path d="M1425.2,225.4 H1430.5 V230.7"/><path d="M1452.8,224.2 V222.6 A1.3,1.3 0 0 1 1454.1,221.3 H1455.3 A1.3,1.3 0 0 1 1456.6,222.6 V224.2"/><line x1="1448.3" y1="224.4" x2="1461.6" y2="224.4"/><path d="M1449.3,226.6 V233.2 A2.2,2.2 0 0 0 1451.5,235.4 H1458.5 A2.2,2.2 0 0 0 1460.7,233.2 V226.6"/><g stroke="#555" stroke-width="1"><line x1="1452.3" y1="227.8" x2="1452.3" y2="232.6"/><line x1="1454.9" y1="227.8" x2="1454.9" y2="232.6"/><line x1="1457.5" y1="227.8" x2="1457.5" y2="232.6"/></g></g>
<g transform="translate(0,62.20)" fill="none" stroke="#111" stroke-width="1.15" stroke-linejoin="round" stroke-linecap="round"><path d="M1422.3,228.3 V223 A1.6,1.6 0 0 1 1423.9,221.4 H1432.9 A1.6,1.6 0 0 1 1434.5,223 V233.8 A1.6,1.6 0 0 1 1432.9,235.4 H1426"/><line x1="1420.2" y1="235.8" x2="1430.2" y2="225.6" stroke-width="0.95"/><path d="M1425.2,225.4 H1430.5 V230.7"/><path d="M1452.8,224.2 V222.6 A1.3,1.3 0 0 1 1454.1,221.3 H1455.3 A1.3,1.3 0 0 1 1456.6,222.6 V224.2"/><line x1="1448.3" y1="224.4" x2="1461.6" y2="224.4"/><path d="M1449.3,226.6 V233.2 A2.2,2.2 0 0 0 1451.5,235.4 H1458.5 A2.2,2.2 0 0 0 1460.7,233.2 V226.6"/><g stroke="#555" stroke-width="1"><line x1="1452.3" y1="227.8" x2="1452.3" y2="232.6"/><line x1="1454.9" y1="227.8" x2="1454.9" y2="232.6"/><line x1="1457.5" y1="227.8" x2="1457.5" y2="232.6"/></g></g>
<g transform="translate(0,93.30)" fill="none" stroke="#111" stroke-width="1.15" stroke-linejoin="round" stroke-linecap="round"><path d="M1422.3,228.3 V223 A1.6,1.6 0 0 1 1423.9,221.4 H1432.9 A1.6,1.6 0 0 1 1434.5,223 V233.8 A1.6,1.6 0 0 1 1432.9,235.4 H1426"/><line x1="1420.2" y1="235.8" x2="1430.2" y2="225.6" stroke-width="0.95"/><path d="M1425.2,225.4 H1430.5 V230.7"/><path d="M1452.8,224.2 V222.6 A1.3,1.3 0 0 1 1454.1,221.3 H1455.3 A1.3,1.3 0 0 1 1456.6,222.6 V224.2"/><line x1="1448.3" y1="224.4" x2="1461.6" y2="224.4"/><path d="M1449.3,226.6 V233.2 A2.2,2.2 0 0 0 1451.5,235.4 H1458.5 A2.2,2.2 0 0 0 1460.7,233.2 V226.6"/><g stroke="#555" stroke-width="1"><line x1="1452.3" y1="227.8" x2="1452.3" y2="232.6"/><line x1="1454.9" y1="227.8" x2="1454.9" y2="232.6"/><line x1="1457.5" y1="227.8" x2="1457.5" y2="232.6"/></g></g>
<g transform="translate(0,124.40)" fill="none" stroke="#111" stroke-width="1.15" stroke-linejoin="round" stroke-linecap="round"><path d="M1422.3,228.3 V223 A1.6,1.6 0 0 1 1423.9,221.4 H1432.9 A1.6,1.6 0 0 1 1434.5,223 V233.8 A1.6,1.6 0 0 1 1432.9,235.4 H1426"/><line x1="1420.2" y1="235.8" x2="1430.2" y2="225.6" stroke-width="0.95"/><path d="M1425.2,225.4 H1430.5 V230.7"/><path d="M1452.8,224.2 V222.6 A1.3,1.3 0 0 1 1454.1,221.3 H1455.3 A1.3,1.3 0 0 1 1456.6,222.6 V224.2"/><line x1="1448.3" y1="224.4" x2="1461.6" y2="224.4"/><path d="M1449.3,226.6 V233.2 A2.2,2.2 0 0 0 1451.5,235.4 H1458.5 A2.2,2.2 0 0 0 1460.7,233.2 V226.6"/><g stroke="#555" stroke-width="1"><line x1="1452.3" y1="227.8" x2="1452.3" y2="232.6"/><line x1="1454.9" y1="227.8" x2="1454.9" y2="232.6"/><line x1="1457.5" y1="227.8" x2="1457.5" y2="232.6"/></g></g>
<g transform="translate(0,155.50)" fill="none" stroke="#111" stroke-width="1.15" stroke-linejoin="round" stroke-linecap="round"><path d="M1422.3,228.3 V223 A1.6,1.6 0 0 1 1423.9,221.4 H1432.9 A1.6,1.6 0 0 1 1434.5,223 V233.8 A1.6,1.6 0 0 1 1432.9,235.4 H1426"/><line x1="1420.2" y1="235.8" x2="1430.2" y2="225.6" stroke-width="0.95"/><path d="M1425.2,225.4 H1430.5 V230.7"/><path d="M1452.8,224.2 V222.6 A1.3,1.3 0 0 1 1454.1,221.3 H1455.3 A1.3,1.3 0 0 1 1456.6,222.6 V224.2"/><line x1="1448.3" y1="224.4" x2="1461.6" y2="224.4"/><path d="M1449.3,226.6 V233.2 A2.2,2.2 0 0 0 1451.5,235.4 H1458.5 A2.2,2.2 0 0 0 1460.7,233.2 V226.6"/><g stroke="#555" stroke-width="1"><line x1="1452.3" y1="227.8" x2="1452.3" y2="232.6"/><line x1="1454.9" y1="227.8" x2="1454.9" y2="232.6"/><line x1="1457.5" y1="227.8" x2="1457.5" y2="232.6"/></g></g>
<g transform="translate(0,186.60)" fill="none" stroke="#111" stroke-width="1.15" stroke-linejoin="round" stroke-linecap="round"><path d="M1422.3,228.3 V223 A1.6,1.6 0 0 1 1423.9,221.4 H1432.9 A1.6,1.6 0 0 1 1434.5,223 V233.8 A1.6,1.6 0 0 1 1432.9,235.4 H1426"/><line x1="1420.2" y1="235.8" x2="1430.2" y2="225.6" stroke-width="0.95"/><path d="M1425.2,225.4 H1430.5 V230.7"/><path d="M1452.8,224.2 V222.6 A1.3,1.3 0 0 1 1454.1,221.3 H1455.3 A1.3,1.3 0 0 1 1456.6,222.6 V224.2"/><line x1="1448.3" y1="224.4" x2="1461.6" y2="224.4"/><path d="M1449.3,226.6 V233.2 A2.2,2.2 0 0 0 1451.5,235.4 H1458.5 A2.2,2.2 0 0 0 1460.7,233.2 V226.6"/><g stroke="#555" stroke-width="1"><line x1="1452.3" y1="227.8" x2="1452.3" y2="232.6"/><line x1="1454.9" y1="227.8" x2="1454.9" y2="232.6"/><line x1="1457.5" y1="227.8" x2="1457.5" y2="232.6"/></g></g>
<g transform="translate(0,217.70)" fill="none" stroke="#111" stroke-width="1.15" stroke-linejoin="round" stroke-linecap="round"><path d="M1422.3,228.3 V223 A1.6,1.6 0 0 1 1423.9,221.4 H1432.9 A1.6,1.6 0 0 1 1434.5,223 V233.8 A1.6,1.6 0 0 1 1432.9,235.4 H1426"/><line x1="1420.2" y1="235.8" x2="1430.2" y2="225.6" stroke-width="0.95"/><path d="M1425.2,225.4 H1430.5 V230.7"/><path d="M1452.8,224.2 V222.6 A1.3,1.3 0 0 1 1454.1,221.3 H1455.3 A1.3,1.3 0 0 1 1456.6,222.6 V224.2"/><line x1="1448.3" y1="224.4" x2="1461.6" y2="224.4"/><path d="M1449.3,226.6 V233.2 A2.2,2.2 0 0 0 1451.5,235.4 H1458.5 A2.2,2.2 0 0 0 1460.7,233.2 V226.6"/><g stroke="#555" stroke-width="1"><line x1="1452.3" y1="227.8" x2="1452.3" y2="232.6"/><line x1="1454.9" y1="227.8" x2="1454.9" y2="232.6"/><line x1="1457.5" y1="227.8" x2="1457.5" y2="232.6"/></g></g>
<g transform="translate(0,248.80)" fill="none" stroke="#111" stroke-width="1.15" stroke-linejoin="round" stroke-linecap="round"><path d="M1422.3,228.3 V223 A1.6,1.6 0 0 1 1423.9,221.4 H1432.9 A1.6,1.6 0 0 1 1434.5,223 V233.8 A1.6,1.6 0 0 1 1432.9,235.4 H1426"/><line x1="1420.2" y1="235.8" x2="1430.2" y2="225.6" stroke-width="0.95"/><path d="M1425.2,225.4 H1430.5 V230.7"/><path d="M1452.8,224.2 V222.6 A1.3,1.3 0 0 1 1454.1,221.3 H1455.3 A1.3,1.3 0 0 1 1456.6,222.6 V224.2"/><line x1="1448.3" y1="224.4" x2="1461.6" y2="224.4"/><path d="M1449.3,226.6 V233.2 A2.2,2.2 0 0 0 1451.5,235.4 H1458.5 A2.2,2.2 0 0 0 1460.7,233.2 V226.6"/><g stroke="#555" stroke-width="1"><line x1="1452.3" y1="227.8" x2="1452.3" y2="232.6"/><line x1="1454.9" y1="227.8" x2="1454.9" y2="232.6"/><line x1="1457.5" y1="227.8" x2="1457.5" y2="232.6"/></g></g>
<g transform="translate(0,279.90)" fill="none" stroke="#111" stroke-width="1.15" stroke-linejoin="round" stroke-linecap="round"><path d="M1422.3,228.3 V223 A1.6,1.6 0 0 1 1423.9,221.4 H1432.9 A1.6,1.6 0 0 1 1434.5,223 V233.8 A1.6,1.6 0 0 1 1432.9,235.4 H1426"/><line x1="1420.2" y1="235.8" x2="1430.2" y2="225.6" stroke-width="0.95"/><path d="M1425.2,225.4 H1430.5 V230.7"/><path d="M1452.8,224.2 V222.6 A1.3,1.3 0 0 1 1454.1,221.3 H1455.3 A1.3,1.3 0 0 1 1456.6,222.6 V224.2"/><line x1="1448.3" y1="224.4" x2="1461.6" y2="224.4"/><path d="M1449.3,226.6 V233.2 A2.2,2.2 0 0 0 1451.5,235.4 H1458.5 A2.2,2.2 0 0 0 1460.7,233.2 V226.6"/><g stroke="#555" stroke-width="1"><line x1="1452.3" y1="227.8" x2="1452.3" y2="232.6"/><line x1="1454.9" y1="227.8" x2="1454.9" y2="232.6"/><line x1="1457.5" y1="227.8" x2="1457.5" y2="232.6"/></g></g>
<g transform="translate(0,311.00)" fill="none" stroke="#111" stroke-width="1.15" stroke-linejoin="round" stroke-linecap="round"><path d="M1422.3,228.3 V223 A1.6,1.6 0 0 1 1423.9,221.4 H1432.9 A1.6,1.6 0 0 1 1434.5,223 V233.8 A1.6,1.6 0 0 1 1432.9,235.4 H1426"/><line x1="1420.2" y1="235.8" x2="1430.2" y2="225.6" stroke-width="0.95"/><path d="M1425.2,225.4 H1430.5 V230.7"/><path d="M1452.8,224.2 V222.6 A1.3,1.3 0 0 1 1454.1,221.3 H1455.3 A1.3,1.3 0 0 1 1456.6,222.6 V224.2"/><line x1="1448.3" y1="224.4" x2="1461.6" y2="224.4"/><path d="M1449.3,226.6 V233.2 A2.2,2.2 0 0 0 1451.5,235.4 H1458.5 A2.2,2.2 0 0 0 1460.7,233.2 V226.6"/><g stroke="#555" stroke-width="1"><line x1="1452.3" y1="227.8" x2="1452.3" y2="232.6"/><line x1="1454.9" y1="227.8" x2="1454.9" y2="232.6"/><line x1="1457.5" y1="227.8" x2="1457.5" y2="232.6"/></g></g>
<g transform="translate(0,342.10)" fill="none" stroke="#111" stroke-width="1.15" stroke-linejoin="round" stroke-linecap="round"><path d="M1422.3,228.3 V223 A1.6,1.6 0 0 1 1423.9,221.4 H1432.9 A1.6,1.6 0 0 1 1434.5,223 V233.8 A1.6,1.6 0 0 1 1432.9,235.4 H1426"/><line x1="1420.2" y1="235.8" x2="1430.2" y2="225.6" stroke-width="0.95"/><path d="M1425.2,225.4 H1430.5 V230.7"/><path d="M1452.8,224.2 V222.6 A1.3,1.3 0 0 1 1454.1,221.3 H1455.3 A1.3,1.3 0 0 1 1456.6,222.6 V224.2"/><line x1="1448.3" y1="224.4" x2="1461.6" y2="224.4"/><path d="M1449.3,226.6 V233.2 A2.2,2.2 0 0 0 1451.5,235.4 H1458.5 A2.2,2.2 0 0 0 1460.7,233.2 V226.6"/><g stroke="#555" stroke-width="1"><line x1="1452.3" y1="227.8" x2="1452.3" y2="232.6"/><line x1="1454.9" y1="227.8" x2="1454.9" y2="232.6"/><line x1="1457.5" y1="227.8" x2="1457.5" y2="232.6"/></g></g>
<g transform="translate(0,373.20)" fill="none" stroke="#111" stroke-width="1.15" stroke-linejoin="round" stroke-linecap="round"><path d="M1422.3,228.3 V223 A1.6,1.6 0 0 1 1423.9,221.4 H1432.9 A1.6,1.6 0 0 1 1434.5,223 V233.8 A1.6,1.6 0 0 1 1432.9,235.4 H1426"/><line x1="1420.2" y1="235.8" x2="1430.2" y2="225.6" stroke-width="0.95"/><path d="M1425.2,225.4 H1430.5 V230.7"/><path d="M1452.8,224.2 V222.6 A1.3,1.3 0 0 1 1454.1,221.3 H1455.3 A1.3,1.3 0 0 1 1456.6,222.6 V224.2"/><line x1="1448.3" y1="224.4" x2="1461.6" y2="224.4"/><path d="M1449.3,226.6 V233.2 A2.2,2.2 0 0 0 1451.5,235.4 H1458.5 A2.2,2.2 0 0 0 1460.7,233.2 V226.6"/><g stroke="#555" stroke-width="1"><line x1="1452.3" y1="227.8" x2="1452.3" y2="232.6"/><line x1="1454.9" y1="227.8" x2="1454.9" y2="232.6"/><line x1="1457.5" y1="227.8" x2="1457.5" y2="232.6"/></g></g>
<g transform="translate(0,404.30)" fill="none" stroke="#111" stroke-width="1.15" stroke-linejoin="round" stroke-linecap="round"><path d="M1422.3,228.3 V223 A1.6,1.6 0 0 1 1423.9,221.4 H1432.9 A1.6,1.6 0 0 1 1434.5,223 V233.8 A1.6,1.6 0 0 1 1432.9,235.4 H1426"/><line x1="1420.2" y1="235.8" x2="1430.2" y2="225.6" stroke-width="0.95"/><path d="M1425.2,225.4 H1430.5 V230.7"/><path d="M1452.8,224.2 V222.6 A1.3,1.3 0 0 1 1454.1,221.3 H1455.3 A1.3,1.3 0 0 1 1456.6,222.6 V224.2"/><line x1="1448.3" y1="224.4" x2="1461.6" y2="224.4"/><path d="M1449.3,226.6 V233.2 A2.2,2.2 0 0 0 1451.5,235.4 H1458.5 A2.2,2.2 0 0 0 1460.7,233.2 V226.6"/><g stroke="#555" stroke-width="1"><line x1="1452.3" y1="227.8" x2="1452.3" y2="232.6"/><line x1="1454.9" y1="227.8" x2="1454.9" y2="232.6"/><line x1="1457.5" y1="227.8" x2="1457.5" y2="232.6"/></g></g>
<g transform="translate(0,435.40)" fill="none" stroke="#111" stroke-width="1.15" stroke-linejoin="round" stroke-linecap="round"><path d="M1422.3,228.3 V223 A1.6,1.6 0 0 1 1423.9,221.4 H1432.9 A1.6,1.6 0 0 1 1434.5,223 V233.8 A1.6,1.6 0 0 1 1432.9,235.4 H1426"/><line x1="1420.2" y1="235.8" x2="1430.2" y2="225.6" stroke-width="0.95"/><path d="M1425.2,225.4 H1430.5 V230.7"/><path d="M1452.8,224.2 V222.6 A1.3,1.3 0 0 1 1454.1,221.3 H1455.3 A1.3,1.3 0 0 1 1456.6,222.6 V224.2"/><line x1="1448.3" y1="224.4" x2="1461.6" y2="224.4"/><path d="M1449.3,226.6 V233.2 A2.2,2.2 0 0 0 1451.5,235.4 H1458.5 A2.2,2.2 0 0 0 1460.7,233.2 V226.6"/><g stroke="#555" stroke-width="1"><line x1="1452.3" y1="227.8" x2="1452.3" y2="232.6"/><line x1="1454.9" y1="227.8" x2="1454.9" y2="232.6"/><line x1="1457.5" y1="227.8" x2="1457.5" y2="232.6"/></g></g>
<g transform="translate(0,466.50)" fill="none" stroke="#111" stroke-width="1.15" stroke-linejoin="round" stroke-linecap="round"><path d="M1422.3,228.3 V223 A1.6,1.6 0 0 1 1423.9,221.4 H1432.9 A1.6,1.6 0 0 1 1434.5,223 V233.8 A1.6,1.6 0 0 1 1432.9,235.4 H1426"/><line x1="1420.2" y1="235.8" x2="1430.2" y2="225.6" stroke-width="0.95"/><path d="M1425.2,225.4 H1430.5 V230.7"/><path d="M1452.8,224.2 V222.6 A1.3,1.3 0 0 1 1454.1,221.3 H1455.3 A1.3,1.3 0 0 1 1456.6,222.6 V224.2"/><line x1="1448.3" y1="224.4" x2="1461.6" y2="224.4"/><path d="M1449.3,226.6 V233.2 A2.2,2.2 0 0 0 1451.5,235.4 H1458.5 A2.2,2.2 0 0 0 1460.7,233.2 V226.6"/><g stroke="#555" stroke-width="1"><line x1="1452.3" y1="227.8" x2="1452.3" y2="232.6"/><line x1="1454.9" y1="227.8" x2="1454.9" y2="232.6"/><line x1="1457.5" y1="227.8" x2="1457.5" y2="232.6"/></g></g>
<g transform="translate(0,497.60)" fill="none" stroke="#111" stroke-width="1.15" stroke-linejoin="round" stroke-linecap="round"><path d="M1422.3,228.3 V223 A1.6,1.6 0 0 1 1423.9,221.4 H1432.9 A1.6,1.6 0 0 1 1434.5,223 V233.8 A1.6,1.6 0 0 1 1432.9,235.4 H1426"/><line x1="1420.2" y1="235.8" x2="1430.2" y2="225.6" stroke-width="0.95"/><path d="M1425.2,225.4 H1430.5 V230.7"/><path d="M1452.8,224.2 V222.6 A1.3,1.3 0 0 1 1454.1,221.3 H1455.3 A1.3,1.3 0 0 1 1456.6,222.6 V224.2"/><line x1="1448.3" y1="224.4" x2="1461.6" y2="224.4"/><path d="M1449.3,226.6 V233.2 A2.2,2.2 0 0 0 1451.5,235.4 H1458.5 A2.2,2.2 0 0 0 1460.7,233.2 V226.6"/><g stroke="#555" stroke-width="1"><line x1="1452.3" y1="227.8" x2="1452.3" y2="232.6"/><line x1="1454.9" y1="227.8" x2="1454.9" y2="232.6"/><line x1="1457.5" y1="227.8" x2="1457.5" y2="232.6"/></g></g>
<g transform="translate(0,528.70)" fill="none" stroke="#111" stroke-width="1.15" stroke-linejoin="round" stroke-linecap="round"><path d="M1422.3,228.3 V223 A1.6,1.6 0 0 1 1423.9,221.4 H1432.9 A1.6,1.6 0 0 1 1434.5,223 V233.8 A1.6,1.6 0 0 1 1432.9,235.4 H1426"/><line x1="1420.2" y1="235.8" x2="1430.2" y2="225.6" stroke-width="0.95"/><path d="M1425.2,225.4 H1430.5 V230.7"/><path d="M1452.8,224.2 V222.6 A1.3,1.3 0 0 1 1454.1,221.3 H1455.3 A1.3,1.3 0 0 1 1456.6,222.6 V224.2"/><line x1="1448.3" y1="224.4" x2="1461.6" y2="224.4"/><path d="M1449.3,226.6 V233.2 A2.2,2.2 0 0 0 1451.5,235.4 H1458.5 A2.2,2.2 0 0 0 1460.7,233.2 V226.6"/><g stroke="#555" stroke-width="1"><line x1="1452.3" y1="227.8" x2="1452.3" y2="232.6"/><line x1="1454.9" y1="227.8" x2="1454.9" y2="232.6"/><line x1="1457.5" y1="227.8" x2="1457.5" y2="232.6"/></g></g>
<g transform="translate(0,559.80)" fill="none" stroke="#111" stroke-width="1.15" stroke-linejoin="round" stroke-linecap="round"><path d="M1422.3,228.3 V223 A1.6,1.6 0 0 1 1423.9,221.4 H1432.9 A1.6,1.6 0 0 1 1434.5,223 V233.8 A1.6,1.6 0 0 1 1432.9,235.4 H1426"/><line x1="1420.2" y1="235.8" x2="1430.2" y2="225.6" stroke-width="0.95"/><path d="M1425.2,225.4 H1430.5 V230.7"/><path d="M1452.8,224.2 V222.6 A1.3,1.3 0 0 1 1454.1,221.3 H1455.3 A1.3,1.3 0 0 1 1456.6,222.6 V224.2"/><line x1="1448.3" y1="224.4" x2="1461.6" y2="224.4"/><path d="M1449.3,226.6 V233.2 A2.2,2.2 0 0 0 1451.5,235.4 H1458.5 A2.2,2.2 0 0 0 1460.7,233.2 V226.6"/><g stroke="#555" stroke-width="1"><line x1="1452.3" y1="227.8" x2="1452.3" y2="232.6"/><line x1="1454.9" y1="227.8" x2="1454.9" y2="232.6"/><line x1="1457.5" y1="227.8" x2="1457.5" y2="232.6"/></g></g>
<g transform="translate(0,590.90)" fill="none" stroke="#111" stroke-width="1.15" stroke-linejoin="round" stroke-linecap="round"><path d="M1422.3,228.3 V223 A1.6,1.6 0 0 1 1423.9,221.4 H1432.9 A1.6,1.6 0 0 1 1434.5,223 V233.8 A1.6,1.6 0 0 1 1432.9,235.4 H1426"/><line x1="1420.2" y1="235.8" x2="1430.2" y2="225.6" stroke-width="0.95"/><path d="M1425.2,225.4 H1430.5 V230.7"/><path d="M1452.8,224.2 V222.6 A1.3,1.3 0 0 1 1454.1,221.3 H1455.3 A1.3,1.3 0 0 1 1456.6,222.6 V224.2"/><line x1="1448.3" y1="224.4" x2="1461.6" y2="224.4"/><path d="M1449.3,226.6 V233.2 A2.2,2.2 0 0 0 1451.5,235.4 H1458.5 A2.2,2.2 0 0 0 1460.7,233.2 V226.6"/><g stroke="#555" stroke-width="1"><line x1="1452.3" y1="227.8" x2="1452.3" y2="232.6"/><line x1="1454.9" y1="227.8" x2="1454.9" y2="232.6"/><line x1="1457.5" y1="227.8" x2="1457.5" y2="232.6"/></g></g>
<g fill="none" stroke="#8a8a8a" stroke-width="1.2" stroke-linecap="round" stroke-linejoin="round"><path d="M405.5,191 L407.7,188.6 L409.9,191"/><path d="M405.5,194.4 L407.7,196.8 L409.9,194.4"/></g>
<g fill="none" stroke="#8a8a8a" stroke-width="1.2" stroke-linecap="round" stroke-linejoin="round"><path d="M663.0,191 L665.2,188.6 L667.4,191"/><path d="M663.0,194.4 L665.2,196.8 L667.4,194.4"/></g>
<g fill="none" stroke="#8a8a8a" stroke-width="1.2" stroke-linecap="round" stroke-linejoin="round"><path d="M1219.8,191 L1222.0,188.6 L1224.2,191"/><path d="M1219.8,194.4 L1222.0,196.8 L1224.2,194.4"/></g></svg></body></html>
